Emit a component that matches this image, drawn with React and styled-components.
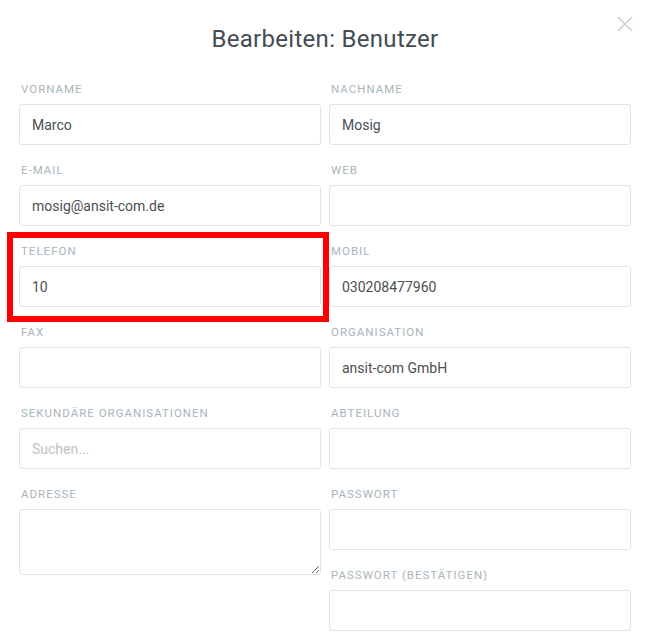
import React from "react";
import styled, { createGlobalStyle } from "styled-components";

const GlobalStyle = createGlobalStyle`
  html, body {
    margin: 0;
    padding: 0;
    background: #fff;
    font-family: Roboto, "Liberation Sans", sans-serif;
  }
`;

const Modal = styled.div`
  position: relative;
  width: 646px;
  height: 641px;
  overflow: hidden;
  box-sizing: border-box;
  padding: 0 15px 0 19px;
`;

const Close = styled.button`
  position: absolute;
  top: 15px;
  right: 12px;
  width: 18px;
  height: 18px;
  padding: 0;
  border: none;
  background: none;
  cursor: pointer;
`;

const Title = styled.h1`
  margin: 0;
  padding-top: 25px;
  height: 56px;
  box-sizing: border-box;
  text-align: center;
  font-size: 24px;
  letter-spacing: 0.3px;
  font-weight: 400;
  color: #434c52;
  line-height: 28px;
`;

const Columns = styled.div`
  display: flex;
  gap: 8px;
  margin-top: 25px;
`;

const Column = styled.div`
  flex: 1;
  display: flex;
  flex-direction: column;
  gap: 17px;
`;

const Field = styled.div`
  position: relative;
  display: flex;
  flex-direction: column;

  ${(p) =>
    p.$highlight &&
    `
    &::after {
      content: "";
      position: absolute;
      top: -11px;
      bottom: -15px;
      left: -12px;
      right: -8px;
      border: 6px solid #ff0000;
      pointer-events: none;
    }
  `}
`;

const Label = styled.label`
  display: block;
  height: 16px;
  line-height: 16px;
  margin-bottom: 7px;
  padding-left: 2px;
  font-size: 11.5px;
  letter-spacing: 1px;
  text-transform: uppercase;
  color: #a9b5bc;
`;

const Input = styled.input`
  box-sizing: border-box;
  width: 100%;
  height: 41px;
  padding: 0 12px;
  border: 1px solid #e1e3e4;
  border-radius: 3px;
  font-family: inherit;
  font-size: 14px;
  color: #4a4f52;
  outline: none;

  &::placeholder {
    color: #bdc2c5;
  }
`;

const TextArea = styled.textarea`
  box-sizing: border-box;
  width: 100%;
  height: 66px;
  padding: 10px 12px;
  border: 1px solid #e1e3e4;
  border-radius: 3px;
  font-family: inherit;
  font-size: 14px;
  color: #4a4f52;
  outline: none;
  resize: vertical;
  display: block;
`;

const left = [
  { label: "Vorname", value: "Marco" },
  { label: "E-Mail", value: "mosig@ansit-com.de" },
  { label: "Telefon", value: "10", highlight: true },
  { label: "Fax", value: "" },
  { label: "Sekundäre Organisationen", value: "", placeholder: "Suchen..." },
  { label: "Adresse", value: "", area: true },
];

const right = [
  { label: "Nachname", value: "Mosig" },
  { label: "Web", value: "" },
  { label: "Mobil", value: "030208477960" },
  { label: "Organisation", value: "ansit-com GmbH" },
  { label: "Abteilung", value: "" },
  { label: "Passwort", value: "", type: "password" },
  { label: "Passwort (bestätigen)", value: "", type: "password" },
];

function FormField({ f }) {
  return (
    <Field $highlight={f.highlight}>
      <Label>{f.label}</Label>
      {f.area ? (
        <TextArea defaultValue={f.value} />
      ) : (
        <Input
          type={f.type || "text"}
          defaultValue={f.value}
          placeholder={f.placeholder}
        />
      )}
    </Field>
  );
}

export default function App() {
  return (
    <>
      <GlobalStyle />
      <Modal>
        <Close aria-label="close">
          <svg width="18" height="18" viewBox="0 0 18 18">
            <path d="M2 2 L16 16 M16 2 L2 16" stroke="#cfcfcf" strokeWidth="1.6" />
          </svg>
        </Close>
        <Title>Bearbeiten: Benutzer</Title>
        <Columns>
          <Column>
            {left.map((f) => (
              <FormField key={f.label} f={f} />
            ))}
          </Column>
          <Column>
            {right.map((f) => (
              <FormField key={f.label} f={f} />
            ))}
          </Column>
        </Columns>
      </Modal>
    </>
  );
}
